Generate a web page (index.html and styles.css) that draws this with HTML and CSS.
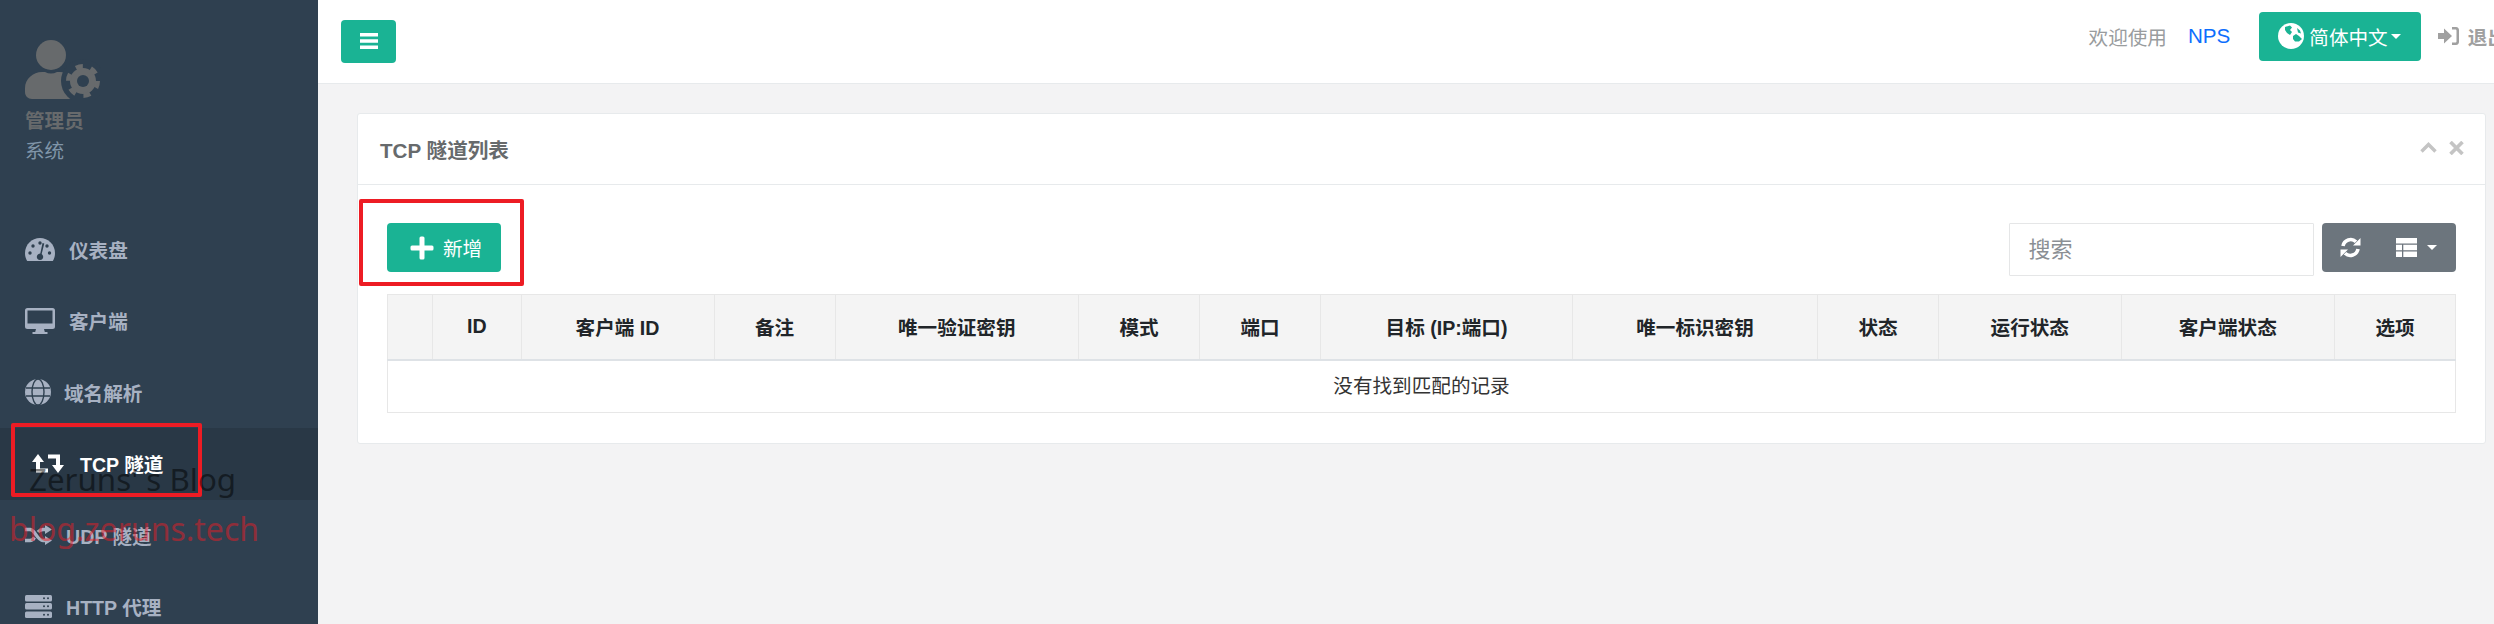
FILE: index.html
```html
<!DOCTYPE html>
<html lang="zh">
<head>
<meta charset="utf-8">
<title>TCP 隧道列表</title>
<link rel="stylesheet" href="styles.css">
</head>
<body>
<div class="page">
  <aside class="sidebar">
    <div class="profile">
      <svg class="avatar" viewBox="0 0 76 60" width="76" height="60">
        <circle cx="26" cy="15" r="15" fill="#676a6c"/>
        <path d="M7 59C3 59 0 56 0 52v-4C0 39 8 32 17 32h3c2 1 4 1.500 6 1.500s4-.5 6-1.500h3c4 0 7 1 10 3l12 24z" fill="#676a6c"/>
        <circle cx="58" cy="41" r="22" fill="#2f4050"/>
        <circle cx="58" cy="41" r="13" fill="#676a6c"/>
        <circle cx="58" cy="41" r="14.500" fill="none" stroke="#676a6c" stroke-width="5" stroke-dasharray="7 8.180"/>
        <circle cx="58" cy="41" r="6" fill="#2f4050"/>
      </svg>
      <div class="profile-name">管理员</div>
      <div class="profile-role">系统</div>
    </div>
    <nav class="menu">
      <a class="item item-a">
        <svg class="ic" viewBox="0 0 30 23" width="30" height="23"><path d="M15 0C6.700 0 0 6.700 0 15c0 3 .8 5.800 2.200 8h25.600C29.200 20.800 30 18 30 15 30 6.700 23.300 0 15 0z" fill="#a7b1c2"/><g fill="#2f4050"><circle cx="5" cy="15" r="1.700"/><circle cx="8" cy="8" r="1.700"/><circle cx="15" cy="5" r="1.700"/><circle cx="24.500" cy="15" r="1.700"/><circle cx="22" cy="8" r="1.700"/><path d="M17.500 5l1.800.5-2.600 10.500c1 .8 1.500 2 1.500 3 0 1.500-1 3-3.200 3s-3.200-1.500-3.200-3c0-1.700 1.500-3.500 3.500-3.500z"/></g></svg>
        <span>仪表盘</span>
      </a>
      <a class="item item-a">
        <svg class="ic" viewBox="0 0 30 26" width="30" height="26"><path d="M2.500 0h25A2.500 2.500 0 0 1 30 2.500v16a2.500 2.500 0 0 1-2.500 2.500H19l.8 3h2.700v2h-15v-2h2.700l.8-3H2.500A2.500 2.500 0 0 1 0 18.500v-16A2.500 2.500 0 0 1 2.500 0zM2.500 2.500v13h25v-13z" fill="#a7b1c2" fill-rule="evenodd"/></svg>
        <span>客户端</span>
      </a>
      <a class="item item-b">
        <svg class="ic" viewBox="0 0 26 26" width="26" height="26"><circle cx="13" cy="13" r="13" fill="#a7b1c2"/><g fill="none" stroke="#2f4050" stroke-width="1.400"><ellipse cx="13" cy="13" rx="6" ry="13"/><path d="M1 9h24M1 17h24"/></g></svg>
        <span>域名解析</span>
      </a>
      <a class="item item-active">
        <svg class="ic" viewBox="0 0 32 19" width="32" height="19"><path d="M6 7v9.500h10M16 2.500h10V12" fill="none" stroke="#fff" stroke-width="4"/><path d="M0 8l6-8 6 8zM20 11h12l-6 8z" fill="#fff"/></svg>
        <span>TCP 隧道</span>
      </a>
      <a class="item item-c">
        <svg class="ic" viewBox="0 0 27 20" width="27" height="20"><path d="M0 4.500h5c5 0 7 11 13 11h3M0 15.500h5c2 0 3.500-1.500 4.500-3M13 7c1.300-1.500 3-2.500 5-2.500h3" fill="none" stroke="#a7b1c2" stroke-width="3.400"/><path d="M20 0l7 4.500-7 4.500zM20 11l7 4.500-7 4.500z" fill="#a7b1c2"/></svg>
        <span>UDP 隧道</span>
      </a>
      <a class="item item-c">
        <svg class="ic" viewBox="0 0 27 23" width="27" height="23"><g fill="#a7b1c2"><rect width="27" height="6.500" rx="1.500"/><rect y="8" width="27" height="6.500" rx="1.500"/><rect y="16.500" width="27" height="6.500" rx="1.500"/></g><g fill="#2f4050"><circle cx="19" cy="3.300" r="1"/><circle cx="23" cy="3.300" r="1"/><circle cx="19" cy="11.300" r="1"/><circle cx="23" cy="11.300" r="1"/><circle cx="19" cy="19.800" r="1"/><circle cx="23" cy="19.800" r="1"/></g></svg>
        <span>HTTP 代理</span>
      </a>
    </nav>
    <div class="mark-box"></div>
    <div class="wm wm-title">Zeruns' s Blog</div>
    <div class="wm wm-url">blog.zeruns.tech</div>
  </aside>

  <main class="main">
    <header class="topbar">
      <button class="btn btn-toggle">
        <svg viewBox="0 0 18 16" width="18" height="16"><path d="M0 0h18v3.400H0zM0 6.300h18v3.400H0zM0 12.600h18V16H0z" fill="#fff"/></svg>
      </button>
      <div class="top-right">
        <span class="welcome">欢迎使用</span>
        <a class="brand">NPS</a>
        <button class="btn btn-lang">
          <svg viewBox="0 0 26 26" width="26" height="26"><circle cx="13" cy="13" r="13" fill="#fff"/><path d="M7 4l5-1.500 2 2-2 2.500 2 2-2 3-3-2-2-3zM15 13l3-2 3 2 3 3-3 2.500h-4l-2-2.500zM19 5l3 2.500 1 3-3-1z" fill="#1ab394"/></svg>
          <span>简体中文</span>
          <i class="caret"></i>
        </button>
        <a class="logout">
          <svg viewBox="0 0 21 18" width="21" height="18"><path d="M0 6h6V1.500L14 9l-8 7.500V12H0zM14 0h4c2 0 3 1.500 3 3v12c0 1.500-1 3-3 3h-4v-2.500h3.500c.5 0 1-.5 1-1v-11c0-.5-.5-1-1-1H14z" fill="#a0a0a0"/></svg>
          <span>退出</span>
        </a>
      </div>
    </header>

    <div class="content">
      <section class="card">
        <div class="card-head">
          <h5 class="card-title">TCP 隧道列表</h5>
          <div class="card-tools">
            <svg viewBox="0 0 17 11" width="17" height="11"><path d="M1.500 9.500L8.500 2.500l7 7" fill="none" stroke="#c4c4c4" stroke-width="3.400"/></svg>
            <svg viewBox="0 0 15 14" width="15" height="14"><path d="M1.500 1l12 12M13.500 1l-12 12" fill="none" stroke="#c4c4c4" stroke-width="3.600"/></svg>
          </div>
        </div>
        <div class="card-body">
          <div class="toolbar">
            <div class="add-wrap">
              <button class="btn btn-add">
                <svg viewBox="0 0 24 24" width="24" height="24"><path d="M9.500 2a1.500 1.500 0 0 1 1.500-1.500h2A1.500 1.500 0 0 1 14.500 2v7.500H22a1.500 1.500 0 0 1 1.500 1.500v2a1.500 1.500 0 0 1-1.500 1.500h-7.500V22a1.500 1.500 0 0 1-1.500 1.500h-2A1.500 1.500 0 0 1 9.500 22v-7.500H2A1.500 1.500 0 0 1 .5 13v-2A1.500 1.500 0 0 1 2 9.500h7.500z" fill="#fff"/></svg>
                <span>新增</span>
              </button>
              <div class="mark-add"></div>
            </div>
            <div class="search-group">
              <input class="search" type="text" placeholder="搜索">
              <div class="tool-btns">
                <svg viewBox="0 0 21 21" width="21" height="21"><path d="M3 9a7.800 7.800 0 0 1 13-4.300M18 12a7.800 7.800 0 0 1-13 4.300" fill="none" stroke="#fff" stroke-width="3.600"/><path d="M20.500 1v7.500H13zM.5 20v-7.500H8z" fill="#fff"/></svg>
                <svg class="tool-list" viewBox="0 0 21 19" width="21" height="19"><path d="M0 0h21v5.500H0zM0 6.800h6v5.400H0zM7.300 6.800H21v5.400H7.300zM0 13.500h6V19H0zM7.300 13.500H21V19H7.300z" fill="#fff"/></svg>
                <i class="caret caret-tool"></i>
              </div>
            </div>
          </div>
          <table class="grid">
            <thead>
              <tr>
                <th></th><th>ID</th><th>客户端 ID</th><th>备注</th><th>唯一验证密钥</th><th>模式</th><th>端口</th><th>目标 (IP:端口)</th><th>唯一标识密钥</th><th>状态</th><th>运行状态</th><th>客户端状态</th><th>选项</th>
              </tr>
            </thead>
            <tbody>
              <tr><td colspan="13">没有找到匹配的记录</td></tr>
            </tbody>
          </table>
        </div>
      </section>
    </div>
  </main>
</div>
</body>
</html>
```
FILE: styles.css
```css
* { box-sizing: border-box; }
html, body { margin: 0; height: 100%; overflow: hidden; }
body {
  font-family: "Liberation Sans", "Noto Sans CJK SC", sans-serif;
  font-size: 19.6px;
  color: #676a6c;
  background: #f3f3f4;
}
.page { display: flex; height: 624px; }

/* sidebar */
.sidebar {
  position: relative;
  flex: 0 0 318px;
  background: #2f4050;
  overflow: hidden;
}
.profile { padding: 40px 0 0 25px; height: 213.5px; }
.avatar { display: block; }
.profile-name { margin-top: 8px; line-height: 26px; font-weight: 700; color: #676a6c; }
.profile-role { margin-top: 4px; line-height: 26px; color: #8095a8; }
.menu { display: flex; flex-direction: column; }
.item {
  display: flex;
  align-items: center;
  height: 71.5px;
  padding-left: 25px;
  font-weight: 700;
  color: #a7b1c2;
}
.item .ic { flex: none; }
.item-a span { margin-left: 14px; }
.item-b span { margin-left: 13px; }
.item-c span { margin-left: 14px; }
.item-active {
  padding-left: 32px;
  color: #fff;
  background: #293846;
}
.item-active span { margin-left: 16px; }
.mark-box {
  position: absolute;
  left: 11px;
  top: 423px;
  width: 191px;
  height: 74px;
  border: 4px solid #ed1c24;
  border-radius: 2px;
}
.wm {
  position: absolute;
  font-family: "Noto Sans", sans-serif;
  white-space: nowrap;
}
.wm-title { left: 29px; top: 456px; font-size: 31.3px; line-height: 46px; color: rgba(0, 0, 0, 0.5); }
.wm-url { left: 9px; top: 506px; font-size: 32px; line-height: 46px; color: rgba(237, 28, 36, 0.5); }

/* main */
.main { flex: 1 1 0; min-width: 0; display: flex; flex-direction: column; }
.topbar {
  flex: none;
  display: flex;
  align-items: center;
  justify-content: space-between;
  height: 84px;
  padding-left: 23px;
  background: #fff;
  border-bottom: 1px solid #e7eaec;
}
.btn {
  display: inline-flex;
  align-items: center;
  justify-content: center;
  padding: 0;
  border: 0;
  border-radius: 4px;
  color: #fff;
  background: #1ab394;
  font: inherit;
}
.btn-toggle { width: 55px; height: 43px; margin-top: -1px; }
.top-right {
  flex: none;
  display: flex;
  align-items: center;
  margin-right: -13px;
  margin-top: -11px;
}
.welcome { color: #999c9e; margin-right: 21px; }
.brand { color: #0d6efd; margin-right: 29px; font-size: 20.6px; }
.btn-lang { width: 162px; height: 49px; justify-content: flex-start; padding-left: 19px; }
.btn-lang span { margin-left: 5px; }
.caret {
  display: inline-block;
  width: 0;
  height: 0;
  margin-left: 3px;
  border-top: 5px solid #fff;
  border-left: 5px solid transparent;
  border-right: 5px solid transparent;
}
.logout { display: flex; align-items: center; margin-left: 16.5px; font-weight: 700; color: #a0a0a0; }
.logout span { margin-left: 9px; }

.content { flex: 1; padding: 29px 8px 0 38.5px; }
.card { background: #fff; border: 1px solid #e7eaec; border-radius: 3px; }
.card-head {
  display: flex;
  align-items: center;
  justify-content: space-between;
  height: 71px;
  padding: 0 21px 0 22.5px;
  border-bottom: 1px solid #e7eaec;
}
.card-title { margin: 0; font-size: 20.6px; font-weight: 700; color: #676a6c; }
.card-tools { display: flex; align-items: center; gap: 12px; margin-top: -3px; }
.card-tools svg { display: block; }
.card-body { padding: 38px 29.5px 30px 29.5px; }
.toolbar { display: flex; justify-content: space-between; align-items: flex-start; height: 49px; }
.add-wrap { position: relative; }
.btn-add { width: 114px; height: 49px; justify-content: flex-start; padding-left: 23px; }
.btn-add span { margin-left: 9px; }
.mark-add {
  position: absolute;
  left: -28px;
  top: -24px;
  width: 165px;
  height: 87px;
  border: 4px solid #ed1c24;
  border-radius: 2px;
}
.search-group { display: flex; align-items: flex-start; gap: 8px; }
.search {
  width: 305px;
  height: 53px;
  padding: 0 19px;
  border: 1px solid #e5e6e7;
  border-radius: 1px;
  font: inherit;
  font-size: 22px;
  color: #676a6c;
  background: #fff;
  outline: 0;
}
.search::placeholder { color: #8b8f94; opacity: 1; }
.tool-btns {
  display: flex;
  align-items: center;
  width: 134px;
  height: 49px;
  padding-left: 18px;
  border-radius: 4px;
  background: #6c757d;
}
.tool-list { margin-left: 35px; }
.caret-tool { margin-left: 10px; }

.grid {
  width: 2068px;
  margin-top: 22px;
  table-layout: fixed;
  border-collapse: collapse;
  color: #212529;
}
.grid th, .grid td { border: 1px solid #e7e7e7; text-align: center; padding: 0; }
.grid th { height: 65px; background: #f4f4f4; border-bottom: 2px solid #dee2e6; font-weight: 700; }
.grid td { height: 53px; padding-bottom: 3px; color: #333; }
.grid th:nth-child(1) { width: 45px; }
.grid th:nth-child(2) { width: 88.5px; }
.grid th:nth-child(3) { width: 193px; }
.grid th:nth-child(4) { width: 121px; }
.grid th:nth-child(5) { width: 243.5px; }
.grid th:nth-child(6) { width: 121px; }
.grid th:nth-child(7) { width: 121px; }
.grid th:nth-child(8) { width: 252px; }
.grid th:nth-child(9) { width: 245px; }
.grid th:nth-child(10) { width: 121px; }
.grid th:nth-child(11) { width: 182.5px; }
.grid th:nth-child(12) { width: 213.5px; }
.grid th:nth-child(13) { width: 121px; }
```
